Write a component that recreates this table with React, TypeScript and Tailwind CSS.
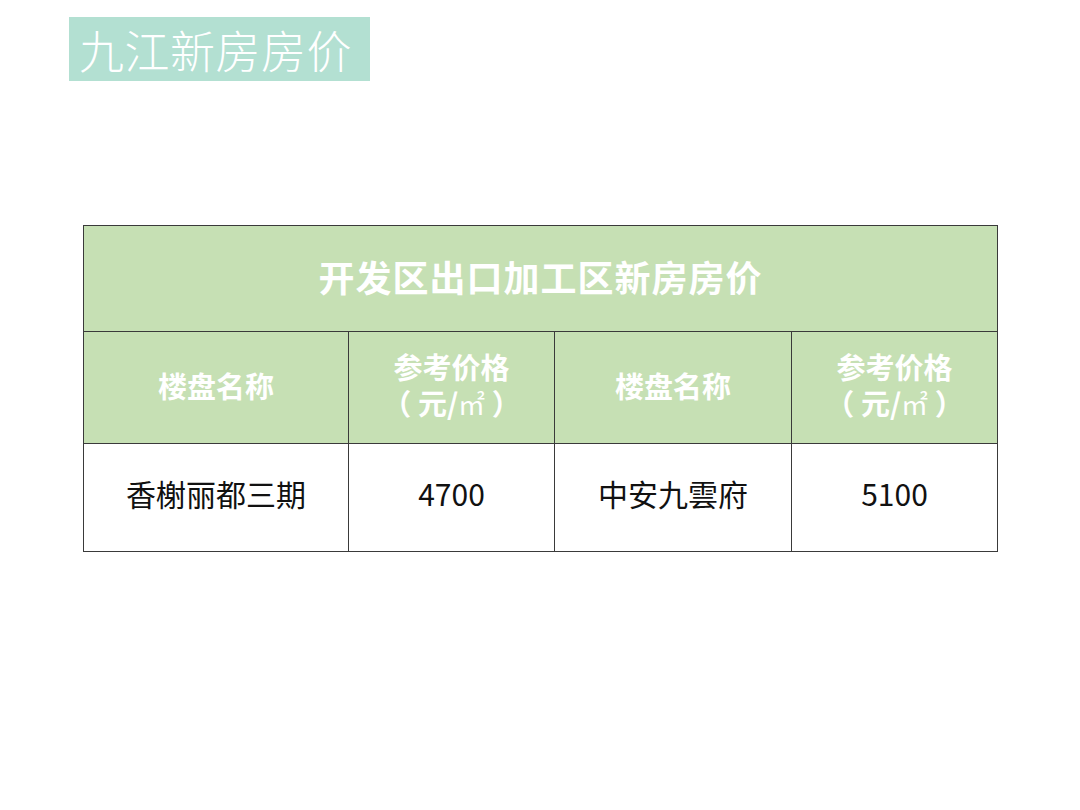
import React from "react";

const cjk = { fontFamily: '"Noto Sans CJK SC", "Noto Sans", sans-serif' };

export default function App() {
  const headCell =
    "border border-[#3a3a3a] bg-[#c6e0b4] text-white font-bold text-[29px] text-center align-middle pb-[3px]";
  const bodyCell =
    "border border-[#3a3a3a] bg-white text-[#111] text-[30px] text-center align-middle pb-[8px]";
  const price = (
    <div className="flex flex-col items-center gap-[1px]">
      <span className="block leading-[35px]">参考价格</span>
      <span className="block leading-[35px]">
        （ 元/<span className="font-normal text-[27px]" style={{ fontFamily: '"Liberation Serif", "Noto Sans CJK SC", serif' }}>㎡</span> ）
      </span>
    </div>
  );
  return (
    <div className="w-[1080px] h-[810px] bg-white relative overflow-hidden" style={cjk}>
      <div className="pt-[17px] pl-[69px]">
        <div className="w-[301px] h-[64px] bg-[#b3e0d2] flex items-center pl-[10px]">
          <span className="text-white text-[45px] font-light leading-none tracking-[0.5px]">
            九江新房房价
          </span>
        </div>
      </div>
      <div className="pl-[83px] pt-[144px]">
        <table className="border-collapse table-fixed w-[914px]">
          <colgroup>
            <col className="w-[265px]" />
            <col className="w-[206px]" />
            <col className="w-[237px]" />
            <col className="w-[206px]" />
          </colgroup>
          <tbody>
            <tr className="h-[106px]">
              <td
                colSpan={4}
                className="border border-[#3a3a3a] bg-[#c6e0b4] text-white font-bold text-[36px] text-center align-middle tracking-[1px] pb-[6px]"
              >
                开发区出口加工区新房房价
              </td>
            </tr>
            <tr className="h-[112px]">
              <td className={headCell}>楼盘名称</td>
              <td className={headCell}>{price}</td>
              <td className={headCell}>楼盘名称</td>
              <td className={headCell}>{price}</td>
            </tr>
            <tr className="h-[108px]">
              <td className={bodyCell}>香榭丽都三期</td>
              <td className={bodyCell}>4700</td>
              <td className={bodyCell}>中安九雲府</td>
              <td className={bodyCell}>5100</td>
            </tr>
          </tbody>
        </table>
      </div>
    </div>
  );
}
